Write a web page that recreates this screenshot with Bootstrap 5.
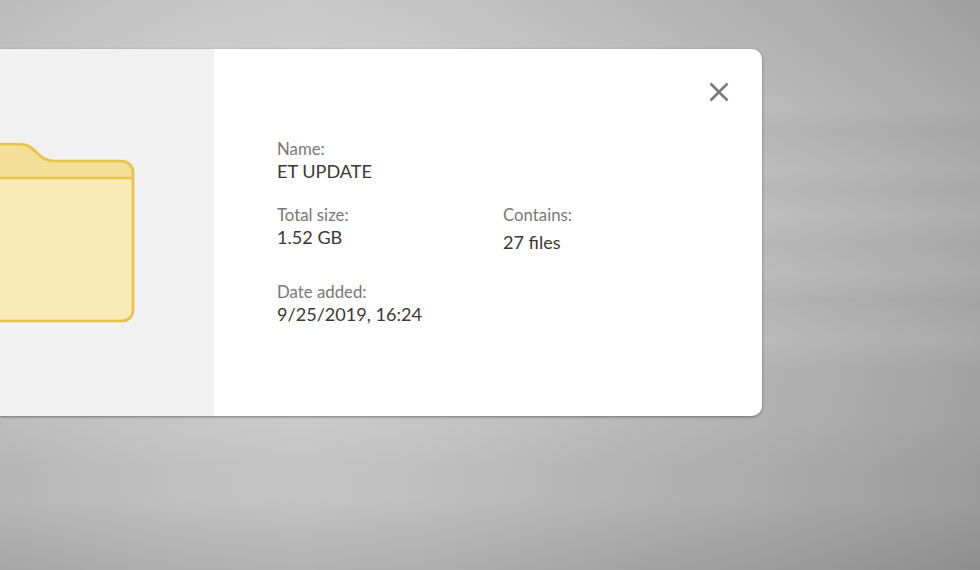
<!DOCTYPE html>
<html lang="en">
<head>
    <meta charset="UTF-8">
    <meta name="viewport" content="width=device-width, initial-scale=1.0">
    <title>File details</title>
    <link rel="stylesheet" href="https://cdn.jsdelivr.net/npm/bootstrap@5.3.0/dist/css/bootstrap.min.css">
    <style>
        html, body { height: 100%; }
        body {
            overflow: hidden;
            font-family: "Lato", sans-serif;
            background-image:
                linear-gradient(90deg, #eeeeee 0, #fbfbfb 180px, #ffffff 300px, #fafafa 420px, #dfdfdf 770px, #cbcbcb 100%),
                linear-gradient(180deg, #c8c8c8 0, #cbcbcb 30px, #d5d5d5 110px, #cfcfcf 130px, #d7d7d7 170px, #d2d2d2 190px, #d9d9d9 215px, #d1d1d1 245px, #d6d6d6 275px, #cdcdcd 300px, #d4d4d4 340px, #cbcbcb 370px, #cacaca 420px, #c3c3c3 470px, #c3c3c3 500px, #bbbbbb 530px, #b2b2b2 570px);
            background-blend-mode: multiply;
        }
        .info-dialog {
            width: 762px;
            height: 367px;
            margin-top: 49px;
            border-radius: 0 10px 10px 0;
            box-shadow: 0 1px 3px rgba(0, 0, 0, .4);
            overflow: hidden;
        }
        .preview-pane {
            width: 214px;
            background: #f1f1f1;
            padding-top: 94px;
        }
        .details-pane { padding: 89px 0 0 63px; }
        .detail-row { margin-bottom: 21px; }
        .detail-row.tall { margin-bottom: 27px; }
        .detail-cell { width: 226px; }
        .detail-label { color: #7a7775; font-size: 16.8px; line-height: 21px; }
        .detail-value { color: #3b3836; font-size: 18.1px; line-height: 24px; }
        .detail-value.shifted { margin-top: 5px; }
        .close-x { top: 32px; right: 32px; width: 22px; height: 22px; line-height: 0; }
    </style>
</head>
<body>
    <div class="info-dialog d-flex bg-white position-relative">
        <div class="preview-pane d-flex justify-content-end align-items-start flex-shrink-0">
            <svg width="214" height="186" viewBox="0 0 214 186">
                <path d="M-10 1H18C27 1 31 4 35 8C40 13 45 18 55 18H121C128 18 133 23 133 29V35H-10Z" fill="#f3df96"/>
                <path d="M-10 35H133V167C133 174 128 178 121 178H-10Z" fill="#f9eab8"/>
                <path d="M-10 1H18C27 1 31 4 35 8C40 13 45 18 55 18H121C128 18 133 23 133 29V167C133 174 128 178 121 178H-10M-10 35H133" fill="none" stroke="#e8c34a" stroke-width="2.7"/>
            </svg>
        </div>
        <div class="details-pane flex-grow-1">
            <div class="detail-row">
                <div class="detail-label">Name:</div>
                <div class="detail-value">ET UPDATE</div>
            </div>
            <div class="detail-row tall d-flex">
                <div class="detail-cell">
                    <div class="detail-label">Total size:</div>
                    <div class="detail-value">1.52 GB</div>
                </div>
                <div class="detail-cell">
                    <div class="detail-label">Contains:</div>
                    <div class="detail-value shifted">27 files</div>
                </div>
            </div>
            <div class="detail-row">
                <div class="detail-label">Date added:</div>
                <div class="detail-value">9/25/2019, 16:24</div>
            </div>
        </div>
        <div class="close-x position-absolute">
            <svg width="22" height="22" viewBox="0 0 22 22">
                <path d="M2.5 2.5L19.5 19.5M19.5 2.5L2.5 19.5" stroke="#7b7b7b" stroke-width="2.6" fill="none"/>
            </svg>
        </div>
    </div>
    <script src="https://cdn.jsdelivr.net/npm/bootstrap@5.3.0/dist/js/bootstrap.bundle.min.js"></script>
</body>
</html>
